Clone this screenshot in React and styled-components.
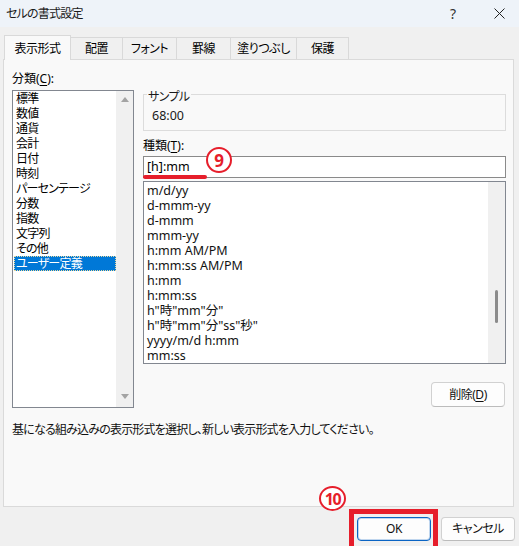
import React from "react";
import styled, { createGlobalStyle } from "styled-components";

const Global = createGlobalStyle`
  html, body { margin: 0; padding: 0; background: #f0f0f0; }
  body {
    font-family: "Noto Sans", "Noto Sans CJK JP", sans-serif;
    font-size: 12px;
    color: #000;
    font-feature-settings: "palt";
  }
  #root { width: 519px; height: 546px; overflow: hidden; }
`;

const Window = styled.div`
  width: 519px;
  height: 546px;
  display: flex;
  flex-direction: column;
  background: #f0f0f0;
  overflow: hidden;
`;

const TitleBar = styled.div`
  height: 27px;
  flex: none;
  display: flex;
  align-items: center;
  background: #eef3f9;
  padding-left: 6px;
  box-sizing: border-box;
`;

const Title = styled.div`
  flex: 1;
  font-size: 12px;
  line-height: 16px;
  letter-spacing: -0.8px;
  color: #1a1a1a;
`;

const TitleButton = styled.div`
  width: 40px;
  height: 24px;
  margin-right: ${(p) => p.$gap || 0}px;
  display: flex;
  align-items: center;
  justify-content: center;
  font-size: 14px;
  color: #333;
`;

const TabStrip = styled.div`
  display: flex;
  align-items: flex-end;
  height: 33px;
  padding-left: 4px;
  box-sizing: border-box;
  position: relative;
  z-index: 1;
  margin-bottom: -1px;
  flex: none;
`;

const Tab = styled.div`
  box-sizing: border-box;
  width: ${(p) => p.$w}px;
  height: ${(p) => (p.$active ? 25 : 22)}px;
  margin-bottom: ${(p) => (p.$active ? 0 : 1)}px;
  margin-left: ${(p) => (p.$first ? 0 : -1)}px;
  border: 1px solid #d9d9d9;
  border-bottom: none;
  background: ${(p) => (p.$active ? "#f9f9f9" : "#f0f0f0")};
  position: relative;
  z-index: ${(p) => (p.$active ? 2 : 1)};
  display: flex;
  align-items: center;
  justify-content: center;
  font-size: 12px;
  line-height: 16px;
  letter-spacing: -0.5px;
  padding-top: ${(p) => (p.$active ? 1 : 0)}px;
`;

const Panel = styled.div`
  box-sizing: border-box;
  margin: 0 5px 0 3px;
  height: 448px;
  flex: none;
  border: 1px solid #dadada;
  background: #f9f9f9;
  padding: 11px 7px 0 8px;
  display: flex;
  flex-direction: column;
`;

const Columns = styled.div`
  display: grid;
  grid-template-columns: 122px 363px;
  column-gap: 9px;
`;

const Column = styled.div`
  display: flex;
  flex-direction: column;
`;

const FieldLabel = styled.div`
  height: 15px;
  line-height: 15px;
  font-size: 12px;
  margin-top: ${(p) => p.$mt || 0}px;
  margin-bottom: ${(p) => p.$mb || 0}px;
`;

const U = styled.span`
  text-decoration: underline;
  text-underline-offset: 2px;
`;

const CategoryBox = styled.div`
  box-sizing: border-box;
  height: 318px;
  border: 1px solid #828790;
  background: #fff;
  display: flex;
`;

const CategoryItems = styled.div`
  flex: 1;
  padding: 0 0 0 1px;
  display: flex;
  flex-direction: column;
`;

const CategoryItem = styled.div`
  height: 15px;
  line-height: 15px;
  padding-left: 2px;
  font-size: 12px;
  letter-spacing: -0.8px;
  white-space: nowrap;
  box-sizing: border-box;
  background: ${(p) => (p.$selected ? "#0078d7" : "transparent")};
  color: ${(p) => (p.$selected ? "#fff" : "#000")};
  outline: ${(p) => (p.$selected ? "1px dotted #e8d9a0" : "none")};
  outline-offset: -1px;
`;

const ScrollTrack = styled.div`
  width: 17px;
  flex: none;
  background: #f0f0f0;
  display: flex;
  flex-direction: column;
  align-items: center;
  justify-content: ${(p) => (p.$arrows ? "space-between" : "flex-start")};
  padding: ${(p) => (p.$arrows ? "6px 0 8px" : "0")};
  box-sizing: border-box;
`;

const Arrow = styled.div`
  width: 0;
  height: 0;
  border-left: 4.5px solid transparent;
  border-right: 4.5px solid transparent;
  ${(p) =>
    p.$down
      ? "border-top: 5px solid #a3a3a3;"
      : "border-bottom: 5px solid #a3a3a3;"}
`;

const Thumb = styled.div`
  width: 3px;
  border-radius: 2px;
  background: #8b8b8b;
  margin-top: ${(p) => p.$top}px;
  height: ${(p) => p.$h}px;
`;

const SampleGroup = styled.fieldset`
  margin: 14px 0 0 0;
  padding: 0 0 6px 3px;
  border: 1px solid #dcdcdc;
  min-width: 0;
`;

const SampleLegend = styled.legend`
  padding: 4px 1px 0 1px;
  line-height: 15px;
  font-size: 12px;
  letter-spacing: -0.6px;
  color: #1a1a1a;
`;

const SampleValue = styled.div`
  margin: 4px 0 0 5px;
  line-height: 16px;
  font-size: 12.5px;
  color: #1a1a1a;
`;

const TextBoxWrap = styled.div`
  position: relative;
  margin-top: 3px;
`;

const TextBox = styled.div`
  box-sizing: border-box;
  height: 22px;
  border: 1px solid #8a8a8a;
  background: #fff;
  padding-left: 3px;
  line-height: 20px;
  font-size: 12.5px;
`;

const RedLine = styled.div`
  position: absolute;
  left: 0;
  top: 19px;
  width: 64px;
  height: 4px;
  border-radius: 2px;
  background: #e61e2b;
`;

const Badge = styled.div`
  position: absolute;
  left: ${(p) => p.$x}px;
  top: ${(p) => p.$y}px;
  width: ${(p) => p.$w}px;
  height: ${(p) => p.$h}px;
  box-sizing: border-box;
  border: 2px solid #e61e2b;
  border-radius: 50%;
  background: #fff;
  color: #e61e2b;
  display: flex;
  align-items: center;
  justify-content: center;
  font-family: "Noto Sans", sans-serif;
  font-weight: 700;
  font-size: ${(p) => p.$fs}px;
  letter-spacing: ${(p) => p.$ls || 0}px;
  line-height: 1;
  z-index: 5;
`;

const TypeBox = styled.div`
  box-sizing: border-box;
  margin-top: 3px;
  height: 183px;
  border: 1px solid #828790;
  background: #fff;
  display: flex;
`;

const TypeItems = styled.div`
  flex: 1;
  padding: 1px 0 0 3px;
  display: flex;
  flex-direction: column;
  overflow: hidden;
`;

const TypeItem = styled.div`
  height: 15px;
  line-height: 15px;
  font-size: 12.5px;
  white-space: nowrap;
  color: #111;
`;

const ButtonRow = styled.div`
  display: flex;
  justify-content: flex-end;
  margin-top: ${(p) => p.$mt || 0}px;
  padding-right: ${(p) => p.$pr || 0}px;
`;

const Button = styled.div`
  box-sizing: border-box;
  width: 74px;
  height: ${(p) => p.$h || 24}px;
  border-radius: 4px;
  border: 1px solid ${(p) => (p.$primary ? "#0a64c4" : "#d1d1d1")};
  border-bottom-color: ${(p) => (p.$primary ? "#0a64c4" : "#bcbcbc")};
  box-shadow: ${(p) => (p.$primary ? "inset 0 0 0 1px rgba(10,100,196,0.25)" : "none")};
  background: #fdfdfd;
  display: flex;
  align-items: center;
  justify-content: center;
  font-size: 12px;
  line-height: 16px;
  letter-spacing: -0.5px;
  color: #111;
`;

const Description = styled.div`
  margin-top: 14px;
  line-height: 16px;
  font-size: 12px;
  letter-spacing: -0.8px;
  color: #111;
`;

const Footer = styled.div`
  display: flex;
  justify-content: flex-end;
  gap: 10px;
  padding: 10px 4px 0 0;
`;

const Highlight = styled.div`
  position: relative;
`;

const RedFrame = styled.div`
  position: absolute;
  left: -8px;
  right: -7px;
  top: -8px;
  bottom: -12px;
  border: 5px solid #e61e2b;
  pointer-events: none;
`;

const tabs = [
  { label: "表示形式", w: 67 },
  { label: "配置", w: 53 },
  { label: "フォント", w: 55 },
  { label: "罫線", w: 55 },
  { label: "塗りつぶし", w: 67 },
  { label: "保護", w: 53 },
];

const categories = [
  "標準",
  "数値",
  "通貨",
  "会計",
  "日付",
  "時刻",
  "パーセンテージ",
  "分数",
  "指数",
  "文字列",
  "その他",
  "ユーザー定義",
];

const types = [
  "m/d/yy",
  "d-mmm-yy",
  "d-mmm",
  "mmm-yy",
  "h:mm AM/PM",
  "h:mm:ss AM/PM",
  "h:mm",
  "h:mm:ss",
  'h"時"mm"分"',
  'h"時"mm"分"ss"秒"',
  "yyyy/m/d h:mm",
  "mm:ss",
];

const CloseIcon = () => (
  <svg width="11" height="11" viewBox="0 0 11 11">
    <path d="M0.5 0.5 L10.5 10.5 M10.5 0.5 L0.5 10.5" stroke="#222" strokeWidth="1" fill="none" />
  </svg>
);

export default function App() {
  return (
    <>
      <Global />
      <Window>
        <TitleBar>
          <Title>セルの書式設定</Title>
          <TitleButton $gap={6}>?</TitleButton>
          <TitleButton>
            <CloseIcon />
          </TitleButton>
        </TitleBar>

        <TabStrip>
          {tabs.map((t, i) => (
            <Tab key={t.label} $w={t.w} $active={i === 0} $first={i === 0}>
              {t.label}
            </Tab>
          ))}
        </TabStrip>

        <Panel>
          <Columns>
            <Column>
              <FieldLabel $mb={4}>
                分類(<U>C</U>):
              </FieldLabel>
              <CategoryBox>
                <CategoryItems>
                  {categories.map((c) => (
                    <CategoryItem key={c} $selected={c === "ユーザー定義"}>
                      {c}
                    </CategoryItem>
                  ))}
                </CategoryItems>
                <ScrollTrack $arrows>
                  <Arrow />
                  <Arrow $down />
                </ScrollTrack>
              </CategoryBox>
            </Column>

            <Column>
              <SampleGroup>
                <SampleLegend>サンプル</SampleLegend>
                <SampleValue>68:00</SampleValue>
              </SampleGroup>
              <FieldLabel $mt={7}>
                種類(<U>T</U>):
              </FieldLabel>
              <TextBoxWrap>
                <TextBox>[h]:mm</TextBox>
                <RedLine />
                <Badge $x={63} $y={-9} $w={26} $h={26} $fs={17}>
                  9
                </Badge>
              </TextBoxWrap>
              <TypeBox>
                <TypeItems>
                  {types.map((t) => (
                    <TypeItem key={t}>{t}</TypeItem>
                  ))}
                </TypeItems>
                <ScrollTrack>
                  <Thumb $top={108} $h={33} />
                </ScrollTrack>
              </TypeBox>
              <ButtonRow $mt={18} $pr={1}>
                <Button $h={25}>
                  削除(<U>D</U>)
                </Button>
              </ButtonRow>
            </Column>
          </Columns>
          <Description>
            基になる組み込みの表示形式を選択し、新しい表示形式を入力してください。
          </Description>
        </Panel>

        <Footer>
          <Highlight>
            <Button $primary>OK</Button>
            <RedFrame />
            <Badge $x={-38} $y={-31} $w={27} $h={25} $fs={16} $ls={-1.5}>
              10
            </Badge>
          </Highlight>
          <Button>キャンセル</Button>
        </Footer>
      </Window>
    </>
  );
}
